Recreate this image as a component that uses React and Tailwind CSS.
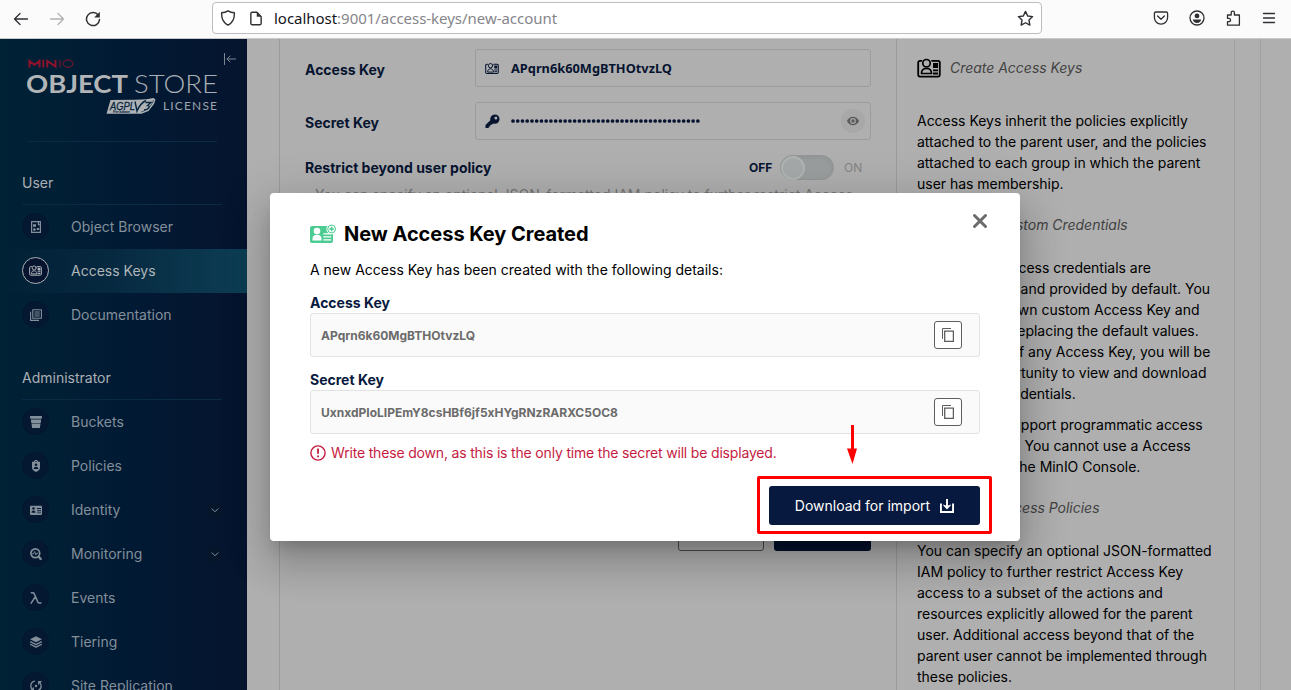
import React from "react";

const line = { fill: "none", stroke: "currentColor", strokeLinecap: "round", strokeLinejoin: "round" };

function AccessIcon({ className }) {
  return (
    <svg viewBox="0 0 24 20" className={className}>
      <path {...line} strokeWidth="1.8" d="M4.5 2.8H3A1.8 1.8 0 0 0 1.2 4.6v12.3A1.9 1.9 0 0 0 3 18.7h18a1.9 1.9 0 0 0 1.8-1.8V4.6A1.8 1.8 0 0 0 21 2.8h-6" />
      <circle cx="9.5" cy="5.2" r="3.7" {...line} strokeWidth="1.7" />
      <path {...line} strokeWidth="1.7" d="M4.5 15.5c0-3 2-5 5-5s5 2 5 5z" />
      <path fill="currentColor" d="M16 5h5v5h-5zM16 11.5h5v1.8h-5zM16 14.6h5v1.8h-5z" />
    </svg>
  );
}

function CardPlusIcon({ className }) {
  return (
    <svg viewBox="0 0 27 20" className={className}>
      <rect x="0" y="2" width="23" height="17" rx="2" fill="#4ccb92" />
      <circle cx="7" cy="7" r="3.3" fill="#fff" />
      <path fill="#fff" d="M2.5 16.5v-2.3c0-2.2 1.8-3.4 4.5-3.4s4.5 1.2 4.5 3.4v2.3zM13.3 9.2h8v1.3h-8zM13.3 12.2h8v1.3h-8zM13.3 15.2h8v1.3h-8z" />
      <circle cx="21.6" cy="5" r="5.2" fill="#fff" />
      <circle cx="21.6" cy="5" r="3.9" fill="none" stroke="#4ccb92" strokeWidth="1" />
      <path d="M21.6 2.7v4.6M19.3 5h4.6" stroke="#4ccb92" strokeWidth="1.5" />
    </svg>
  );
}

const glyphs = {
  browser: (
    <>
      <path {...line} strokeWidth="1.2" d="M1.6.6h8.8v10.8H1.6z" />
      <path fill="currentColor" d="M3 3.2h3v2.6H3zM6.8 7h2.4v2H6.8zM7.8 1h1.2v2.2h1.4v1H7.8z" />
      <circle cx="4.4" cy="8.6" r="1.3" fill="currentColor" />
    </>
  ),
  docs: (
    <>
      <path {...line} strokeWidth="1.1" d="M2.8.8h8.6v8.4H2.8zM.6 3v8.4h8" />
      <path stroke="currentColor" strokeWidth="1.1" d="M4.5 3h5.2M4.5 5h5.2M4.5 7h5.2" />
    </>
  ),
  bucket: <path fill="currentColor" d="M0 0h12l-.3 2.8H.3zM.8 3.5h10.4l-.5 3.4H1.3zM1.5 7.6h9l-.6 4.4H2.1z" />,
  policy: (
    <path fill="currentColor" fillRule="evenodd" d="M4 1.8C4 .6 4.8 0 6 0s2 .6 2 1.8h2v6c0 2-2 3.5-4 4.2-2-.7-4-2.2-4-4.2v-6zM5 1.8h2C7 1.2 6.6.9 6 .9s-1 .3-1 .9M6 3.4a1.3 1.3 0 1 0 0 2.6 1.3 1.3 0 0 0 0-2.6M3.7 8.9h4.6c0-3-4.6-3-4.6 0" />
  ),
  identity: (
    <path fill="currentColor" fillRule="evenodd" d="M1.3 1.7h9.4c.8 0 1.3.5 1.3 1.3v6.8c0 .8-.5 1.3-1.3 1.3H1.3C.5 11.1 0 10.6 0 9.8V3c0-.8.5-1.3 1.3-1.3M3.5 3.2a1.3 1.3 0 1 0 0 2.6 1.3 1.3 0 0 0 0-2.6M1.5 8.8h4c0-3-4-3-4 0M7 4h4v1H7zM7 6.2h4v1H7zM7 8.4h4v.9H7z" />
  ),
  monitor: (
    <>
      <circle cx="5.3" cy="5.3" r="4.4" {...line} strokeWidth="1.7" />
      <path {...line} strokeWidth="2.3" d="m8.8 8.8 1.9 2.1" />
      <path {...line} strokeWidth=".9" d="M2.3 5.8h1.2l1.1-2.3 1.2 3.5.9-1.8h1.2" />
    </>
  ),
  lambda: <path {...line} strokeWidth="1.5" d="M1.3.8h1.4c.8 0 1.2.3 1.5 1l3.7 8.3c.3.7.7 1 1.5 1h1.6M5.4 4.6 1.2 11.2" />,
  tiers: (
    <>
      <path fill="currentColor" d="m6 .2 6 3-6 3-6-3z" />
      <path {...line} strokeWidth="1.4" d="m.7 5.9 5.3 2.7 5.3-2.7M.7 8.5 6 11.2l5.3-2.7" />
    </>
  ),
  sync: (
    <>
      <path {...line} strokeWidth="1.3" d="M4.5 1.2C2.1 1.9.8 3.9.8 6c0 1.7.9 3.3 2.3 4.2M.9 10.4h2.4V8M7.5 10.8c2.4-.7 3.7-2.7 3.7-4.8 0-1.7-.9-3.3-2.3-4.2M11.1 1.6H8.7V4" />
      <circle cx="6" cy="6" r="1.2" fill="currentColor" />
    </>
  ),
};

function NavItem({ icon, label, active, expandable }) {
  return (
    <div className={active
      ? "flex h-11 items-center bg-gradient-to-r from-transparent via-[#072b42] to-[#0d3e54] pl-[22px] pr-[25px] text-[#b0b5b9]"
      : "flex h-11 items-center pl-[22px] pr-[25px] text-[#838f9b]"}>
      <div className={active
        ? "-mt-px flex size-[27px] items-center justify-center rounded-full border border-[#adb2b5] bg-[#06142f]"
        : "-mt-px flex size-[27px] items-center justify-center rounded-full border border-[#031630] bg-[#041832]"}>
        {icon === "access"
          ? <AccessIcon className="h-[11px] w-[13px]" />
          : <svg viewBox="0 0 12 12" className="size-3">{glyphs[icon]}</svg>}
      </div>
      <span className="ml-[22px] flex-1 pb-0.5 text-[14px]">{label}</span>
      {expandable && (
        <span className="flex size-[15px] items-center justify-center rounded-sm bg-[#05152a]">
          <svg viewBox="0 0 8 5" className="h-[5px] w-2"><path {...line} d="m1 .8 3 3 3-3" /></svg>
        </span>
      )}
    </div>
  );
}

function BrowserBar() {
  return (
    <header className="flex h-[39px] shrink-0 items-center border-b border-[#c9c9cb] bg-[#fbfbfb] pb-0.5 text-[#303034]">
      <svg viewBox="0 0 16 16" className="ml-[13px] mt-px size-4"><path {...line} strokeWidth="1.3" d="M14.5 8H1.5M7 2.5 1.5 8 7 13.5" /></svg>
      <svg viewBox="0 0 16 16" className="ml-5 mt-px size-4 text-[#b1b1b3]"><path {...line} strokeWidth="1.3" d="M1.5 8h13M9 2.5 14.5 8 9 13.5" /></svg>
      <svg viewBox="0 0 16 16" className="ml-5 mt-px size-4">
        <path {...line} strokeWidth="1.5" d="M13.3 4.3A6.5 6.5 0 1 0 14.5 8.5" />
        <path fill="currentColor" d="M14.8.8v5.6H9.2z" />
      </svg>
      <div className="ml-[111px] flex h-8 w-[830px] items-center rounded border border-[#bdbdbf] bg-white pl-[7px] pr-[7px]">
        <svg viewBox="0 0 16 16" className="size-4"><path {...line} strokeWidth="1.4" d="M8 .8c2 1.3 4 1.9 6.3 2 .4 5.4-1.3 9.6-6.3 12.4C3 12.4 1.3 8.2 1.7 2.8 4 2.7 6 2.1 8 .8z" /></svg>
        <svg viewBox="0 0 14 16" className="ml-[13px] h-[15px] w-[14px]"><path {...line} strokeWidth="1.5" d="M2.8 1.3H8L12.5 6v7.3a1.3 1.3 0 0 1-1.3 1.3H2.8a1.3 1.3 0 0 1-1.3-1.3V2.6c0-.8.5-1.3 1.3-1.3z" /><path fill="currentColor" d="M7.8 1v5.2h5z" /></svg>
        <span className="ml-[11px] flex-1 whitespace-nowrap font-['Noto_Sans',sans-serif] text-[15px] tracking-[-0.03px] text-[#85858a]"><span className="text-[#15141a]">localhost</span>:9001/access-keys/new-account</span>
        <svg viewBox="0 0 18 18" className="size-[17px]"><path {...line} strokeWidth="1.5" d="m9 1.5 2.3 4.8 5.2.7-3.8 3.7.9 5.3L9 13.5 4.4 16l.9-5.3L1.5 7l5.2-.7z" /></svg>
      </div>
      <div className="ml-[111px] flex items-center gap-5">
        <svg viewBox="0 0 16 16" className="size-4"><path {...line} strokeWidth="1.3" d="M2.8 2h10.4c.8 0 1.4.6 1.4 1.4v4.1a6.6 6.6 0 0 1-13.2 0V3.4C1.4 2.6 2 2 2.8 2zM4.6 6 8 9.2 11.4 6" /></svg>
        <svg viewBox="0 0 16 16" className="size-4"><circle cx="8" cy="8" r="7" {...line} strokeWidth="1.3" /><circle cx="8" cy="5.9" r="2.4" fill="currentColor" /><path fill="currentColor" d="M3.9 9.6h8.2C11.9 11.9 10.2 13 8 13s-3.9-1.1-4.1-3.4z" /></svg>
        <svg viewBox="0 0 16 16" className="size-4"><path {...line} strokeWidth="1.3" d="M2.5 5h3.7V2.7a1.6 1.6 0 0 1 3.2 0V5h5v10.2H2.5v-3.5h1.4a1.6 1.6 0 0 0 0-3.3H2.5z" /></svg>
        <svg viewBox="0 0 16 16" className="size-4"><path {...line} strokeWidth="1.3" d="M2.5 3.500h11M2.500 8h11M2.500 12.500h11" /></svg>
      </div>
    </header>
  );
}

function Logo() {
  return (
    <svg viewBox="0 0 192 58" className="h-[58px] w-[192px] shrink-0" fontFamily="Lato, sans-serif">
      <g fill="none" stroke="#8d132d" strokeWidth="2">
        <path d="M2.4 8.500V1.900L7.500 5.900l5-4v6.600M16.300.8v7.700M20.300 8.500V1.900l8.200 5.700V.8" />
        <path strokeWidth="1" d="M33 .8v7.700" />
        <ellipse cx="41" cy="4.600" rx="5" ry="3.700" strokeWidth="1" />
      </g>
      <text x="-1" y="33.500" fill="#b2b5b8" fontSize="25.500" fontWeight="700" textLength="102" lengthAdjust="spacingAndGlyphs">OBJECT</text>
      <text x="107" y="33.500" fill="#a9afb4" fontSize="25.500" fontWeight="300" textLength="84" lengthAdjust="spacingAndGlyphs">STORE</text>
      <path fill="#aeb2b5" d="m83.500 41 25-.3 11-.5 7-1.200 2 1.500-1.500 4.500-5.500 7-7 2.800H79.500z" />
      <text x="83" y="50.500" fill="#062640" fontFamily="Liberation Sans, sans-serif" fontSize="11.500" fontStyle="italic" textLength="25" stroke="#062640" strokeWidth=".3" lengthAdjust="spacingAndGlyphs">AGPL</text>
      <text x="86" y="54" fill="#062640" fontFamily="Liberation Sans, sans-serif" fontSize="3" fontWeight="700" textLength="17">Free Software</text>
      <path fill="none" stroke="#062640" strokeWidth="1.400" d="m108 42.500 2 9.500c2-5 5-8.500 9-10.500" />
      <path fill="none" stroke="#062640" strokeWidth="1.300" d="M118.500 43.500h5.500l-3.500 3c3 0 2.500 4-3.500 4.500" />
      <path fill="none" stroke="#062640" strokeWidth=".6" d="M114 53c6-1.500 11-6.500 12.500-12" />
      <text x="136" y="51" fill="#9da4ab" fontSize="12" textLength="54">LICENSE</text>
    </svg>
  );
}

function Sidebar() {
  return (
    <aside className="flex w-[247px] shrink-0 flex-col overflow-hidden bg-gradient-to-r from-[#002235] via-[#011a34] to-[#06142e]">
      <div className="flex h-[102px] shrink-0 items-start pl-[27px] pt-5">
        <Logo />
        <svg viewBox="0 0 12 12" className="-mt-[6px] ml-[5px] size-3 shrink-0 text-[#7b8792]"><path {...line} d="M.5.5v11M11.5 6H3M6 3 3 6l3 3" /></svg>
      </div>
      <div className="ml-[27px] mr-[30px] border-t border-[#092b45]" />
      <h2 className="ml-[22px] mr-[25px] flex h-[63px] shrink-0 items-end border-b border-[#092b45] pb-[11px] text-[14px] text-[#acb0b4]">User</h2>
      <nav className="flex shrink-0 flex-col">
        <NavItem icon="browser" label="Object Browser" />
        <NavItem icon="access" label="Access Keys" active />
        <NavItem icon="docs" label="Documentation" />
      </nav>
      <h2 className="ml-[22px] mr-[25px] flex h-[63px] shrink-0 items-end border-b border-[#092b45] pb-[11px] text-[14px] text-[#acb0b4]">Administrator</h2>
      <nav className="flex shrink-0 flex-col">
        <NavItem icon="bucket" label="Buckets" />
        <NavItem icon="policy" label="Policies" />
        <NavItem icon="identity" label="Identity" expandable />
        <NavItem icon="monitor" label="Monitoring" expandable />
        <NavItem icon="lambda" label="Events" />
        <NavItem icon="tiers" label="Tiering" />
        <NavItem icon="sync" label="Site Replication" />
      </nav>
    </aside>
  );
}

function KeyForm() {
  return (
    <section className="flex w-[618px] shrink-0 flex-col border-x border-[#9b9b9b] px-[25px] pt-[10px] text-[#06142f]">
      <div className="flex h-[38px] items-center">
        <label className="w-[170px] shrink-0 pt-0.5 text-[14px] font-bold">Access Key</label>
        <div className="flex h-[38px] w-[396px] shrink-0 items-center rounded-[3px] border border-[#9c9c9c] pl-[9px]">
          <AccessIcon className="h-[13px] w-[14px]" />
          <span className="ml-3 pt-px font-['Noto_Sans',sans-serif] text-[12.8px] font-bold">APqrn6k60MgBTHOtvzLQ</span>
        </div>
      </div>
      <div className="mt-[15px] flex h-[38px] items-center">
        <label className="w-[170px] shrink-0 pt-0.5 text-[14px] font-bold">Secret Key</label>
        <div className="flex h-[38px] w-[396px] shrink-0 items-center rounded-[3px] border border-[#9c9c9c] pl-[9px] pr-[5px]">
          <svg viewBox="0 0 16 16" className="size-[15px]"><path fill="currentColor" fillRule="evenodd" d="M10.5.4a5 5 0 0 1 0 10c-.6 0-1.2-.1-1.8-.3L7.3 11.500H5.600v1.700H4V15H.5v-3.200l5.200-5.200A5 5 0 0 1 10.500.4m1.100 2.300a1.600 1.600 0 1 0 0 3.200 1.600 1.600 0 0 0 0-3.200" /></svg>
          <svg viewBox="0 0 190 6" className="ml-[11px] h-[6px] w-[190px]"><path d="M2 3h186" stroke="currentColor" strokeWidth="3.700" strokeLinecap="round" strokeDasharray="0 4.740" /></svg>
          <span className="ml-auto flex size-6 items-center justify-center rounded-full bg-[#a8a8a8]">
            <svg viewBox="0 0 12 10" className="h-[10px] w-3 text-[#5b5b5b]"><path fill="currentColor" fillRule="evenodd" d="M6 .8c2.700 0 5 1.700 6 4.200-1 2.500-3.300 4.200-6 4.200S1 7.500 0 5C1 2.500 3.300.8 6 .8m0 1.300a2.900 2.900 0 1 0 0 5.800 2.900 2.900 0 0 0 0-5.800" /><circle cx="6" cy="5" r="1.700" fill="currentColor" /></svg>
          </span>
        </div>
      </div>
      <div className="mt-[14px] flex h-[27px] items-center text-[12px]">
        <span className="w-[444px] text-[14px] font-bold">Restrict beyond user policy</span>
        <span className="w-[31px] font-bold">OFF</span>
        <span className="flex h-[25px] w-[54px] items-center rounded-full border border-[#939596] bg-[#9a9d9e] shadow-inner"><span className="size-6 rounded-full border-2 border-[#b0b4b3] bg-[#a5a8a8]" /></span>
        <span className="ml-[10px] text-[#838383]">ON</span>
      </div>
      <p className="ml-[10px] mt-[3px] whitespace-nowrap text-[14px] text-[#747474]">You can specify an optional JSON-formatted IAM policy to further restrict Access</p>
      <div className="mt-[305px] flex gap-[10px] pl-[373px]">
        <button className="h-[41px] w-[86px] shrink-0 rounded-[3px] border border-[#4c4c4c]" />
        <button className="h-[41px] w-[97px] shrink-0 rounded-[3px] bg-[#04112c]" />
      </div>
    </section>
  );
}

function HelpPanel() {
  return (
    <aside className="w-[338px] shrink-0 border-r border-[#a0a0a0] pl-5 text-[14px] leading-[21px] tracking-[-0.02px] text-black [&_p]:whitespace-nowrap">
      <h3 className="flex h-[57px] items-center text-[14px] italic text-[#424242]"><AccessIcon className="mr-[9px] mt-px h-5 w-6 text-black" />Create Access Keys</h3>
      <p className="mt-[14px]">Access Keys inherit the policies explicitly<br />attached to the parent user, and the policies<br />attached to each group in which the parent<br />user has membership.</p>
      <h3 className="pl-8 pt-5 italic text-[#424242]">Assign Custom Credentials</h3>
      <p className="mt-[22px]">Randomized access credentials are<br />recommended, and provided by default. You<br />may use your own custom Access Key and<br />Secret Key by replacing the default values.<br />After creation of any Access Key, you will be<br />given the opportunity to view and download<br />the account credentials.</p>
      <p className="mt-[10px]">Access Keys support programmatic access<br />by applications. You cannot use a Access<br />Key to log into the MinIO Console.</p>
      <h3 className="pl-[31px] pt-5 italic text-[#424242]">Assign Access Policies</h3>
      <p className="mt-[22px]">You can specify an optional JSON-formatted<br />IAM policy to further restrict Access Key<br />access to a subset of the actions and<br />resources explicitly allowed for the parent<br />user. Additional access beyond that of the<br />parent user cannot be implemented through<br />these policies.</p>
    </aside>
  );
}

function Credential({ label, value }) {
  return (
    <div className="flex flex-col">
      <span className="h-[21px] text-[14px] font-bold leading-[21px] text-[#07193e]">{label}</span>
      <div className="flex h-[44px] items-center justify-between rounded-[3px] border border-[#e2e2e2] bg-[#fafafa] pl-[10px] pr-[17px]">
        <span className="pt-0.5 text-[12px] font-bold text-[#6b6b6b]">{value}</span>
        <button className="flex size-7 items-center justify-center rounded-[3px] border border-[#5e5e5e] bg-white">
          <svg viewBox="0 0 12 14" className="h-[14px] w-3 text-[#5e5e5e]"><path fill="none" stroke="currentColor" d="M.5 11V.5H9" /><path fill="none" stroke="currentColor" strokeWidth="1.3" d="M2.7 3.1h8.7v10.2H2.7z" /></svg>
        </button>
      </div>
    </div>
  );
}

function KeyDialog() {
  return (
    <div role="dialog" className="absolute left-[270px] top-[193px] flex h-[348px] w-[750px] flex-col rounded bg-white px-10 pt-[30px] text-black shadow-[0_11px_15px_-7px_rgba(0,0,0,0.2),0_24px_38px_3px_rgba(0,0,0,0.14),0_9px_46px_8px_rgba(0,0,0,0.12)]">
      <div className="flex h-[22px] items-center">
        <CardPlusIcon className="h-5 w-[27px]" />
        <h1 className="ml-[7px] text-[20px] font-bold leading-[22px] tracking-[-0.04px]">New Access Key Created</h1>
      </div>
      <button className="absolute right-8 top-5 flex size-4 items-center justify-center text-[#6b6b6b]"><svg viewBox="0 0 16 16" className="size-4"><path {...line} strokeWidth="3" d="m2.5 2.5 11 11m0-11-11 11" /></svg></button>
      <p className="mt-[14px] text-[14px] leading-[21px]">A new Access Key has been created with the following details:</p>
      <div className="mt-[12px] flex flex-col gap-3">
        <Credential label="Access Key" value="APqrn6k60MgBTHOtvzLQ" />
        <Credential label="Secret Key" value="UxnxdPIoLIPEmY8csHBf6jf5xHYgRNzRARXC5OC8" />
      </div>
      <div className="mt-2 flex h-[21px] items-center whitespace-nowrap text-[14px] tracking-[-0.175px] text-[#c51b3f]">
        <svg viewBox="0 0 16 16" className="mr-[5px] size-4"><circle cx="8" cy="8" r="7.1" fill="none" stroke="currentColor" strokeWidth="1.4" /><path stroke="currentColor" strokeWidth="1.8" d="M8 3.5v5.3M8 10.5v1.8" /></svg>
        Write these down, as this is the only time the secret will be displayed.
      </div>
      <div className="mt-[23px] flex justify-end">
        <button className="flex h-[39px] w-[211px] items-center justify-center rounded-[3px] bg-[#07193e] text-[14px] text-white">
          Download for import
          <svg viewBox="0 0 14 14" className="ml-[10px] size-[14px]"><path fill="none" stroke="currentColor" strokeWidth="1.9" d="M.95 4.500v8.500h12.100V4.500M7 0v8" /><path fill="currentColor" d="M3.300 5.500 7 7l3.700-1.500v1L7 10.600 3.300 6.500z" /></svg>
        </button>
      </div>
      <svg viewBox="0 0 10 40" className="absolute left-[577px] top-[231px] h-10 w-[10px]"><path fill="#f00" d="M4 1h3v23.500h3L5.500 40 0 24.500h4z" /></svg>
      <div className="absolute left-[487px] top-[283px] h-[58px] w-[235px] rounded-[2px] border-[3px] border-[#f00]" />
    </div>
  );
}

export default function App() {
  return (
    <div className="relative flex h-[690px] w-[1291px] flex-col overflow-hidden bg-[#afafaf] font-[Inter,sans-serif]">
      <BrowserBar />
      <div className="relative z-0 flex min-h-0 flex-1 overflow-hidden">
        <Sidebar />
        <main className="flex flex-1 pl-8">
          <KeyForm />
          <HelpPanel />
          <div className="w-[26px] border-r border-[#a0a0a0]" />
        </main>
      </div>
      <KeyDialog />
    </div>
  );
}
